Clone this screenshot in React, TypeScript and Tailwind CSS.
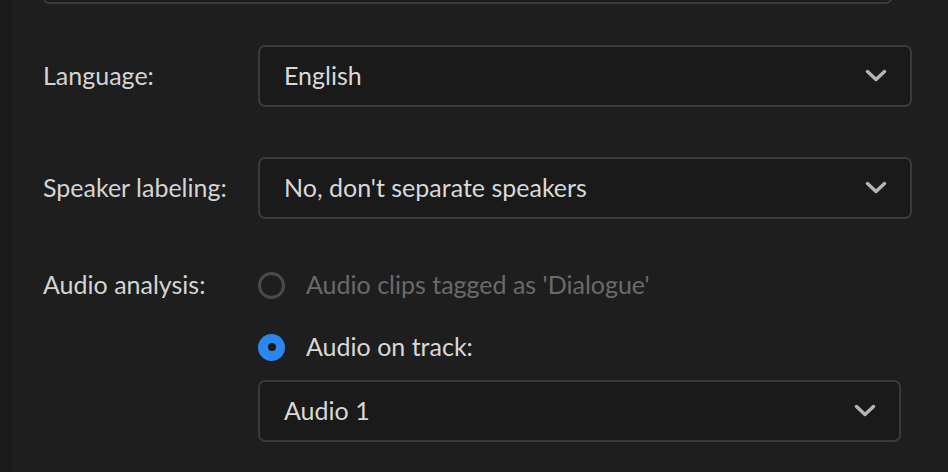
import React from 'react';

const Chevron: React.FC = () => (
    <svg width="22" height="14" viewBox="0 0 22 14" fill="none" className="shrink-0">
        <path d="M2.5 2.5 L11 10.5 L19.5 2.5" stroke="#b4b4b4" strokeWidth="3.5" strokeLinecap="round" strokeLinejoin="round" />
    </svg>
);

const Select: React.FC<{ value: string; width: string }> = ({ value, width }) => (
    <div className={`${width} h-[62px] flex items-center justify-between pl-[24px] pr-[23px] bg-[#1a1a1a] border-2 border-[#3a3a3a] rounded-[7px]`}>
        <span className="text-[25px] text-[#d8d8d8]">{value}</span>
        <Chevron />
    </div>
);

const Radio: React.FC<{ checked?: boolean; disabled?: boolean; label: string }> = ({ checked, disabled, label }) => (
    <div className="flex items-center gap-[21px] h-[30px]">
        {checked ? (
            <div className="w-[27px] h-[27px] rounded-full bg-[#2d86ee] flex items-center justify-center">
                <div className="w-[8px] h-[8px] rounded-full bg-[#1a1a1a]" />
            </div>
        ) : (
            <div className="w-[27px] h-[27px] rounded-full border-[3px] border-[#4a4a4a]" />
        )}
        <span className={`text-[25px] ${disabled ? 'text-[#6a6a6a]' : 'text-[#d8d8d8]'}`}>{label}</span>
    </div>
);

export default function App() {
    return (
        <div className="w-[948px] h-[472px] bg-[#1e1e1e] flex overflow-hidden" style={{ fontFamily: 'Lato, "Noto Sans", sans-serif' }}>
            <div className="w-[12px] bg-[#1a1a1a] shrink-0" />
            <div className="flex-1 pl-[31px]">
                <div className="-mt-[19px] h-[23px] w-[849px] border-2 border-[#3a3a3a] rounded-[6px] bg-[#1c1c1c]" />

                <div className="flex items-center mt-[41px]">
                    <div className="w-[215px] text-[25px] text-[#d4d4d4]">Language:</div>
                    <Select value="English" width="w-[654px]" />
                </div>

                <div className="flex items-center mt-[50px]">
                    <div className="w-[215px] text-[25px] text-[#d4d4d4]">Speaker labeling:</div>
                    <Select value="No, don't separate speakers" width="w-[654px]" />
                </div>

                <div className="flex mt-[51px]">
                    <div className="w-[215px] h-[30px] flex items-center text-[25px] text-[#d4d4d4]">Audio analysis:</div>
                    <div className="flex flex-col">
                        <Radio disabled label="Audio clips tagged as 'Dialogue'" />
                        <div className="mt-[32px]">
                            <Radio checked label="Audio on track:" />
                        </div>
                        <div className="mt-[18px]">
                            <Select value="Audio 1" width="w-[643px]" />
                        </div>
                    </div>
                </div>
            </div>
        </div>
    );
}
